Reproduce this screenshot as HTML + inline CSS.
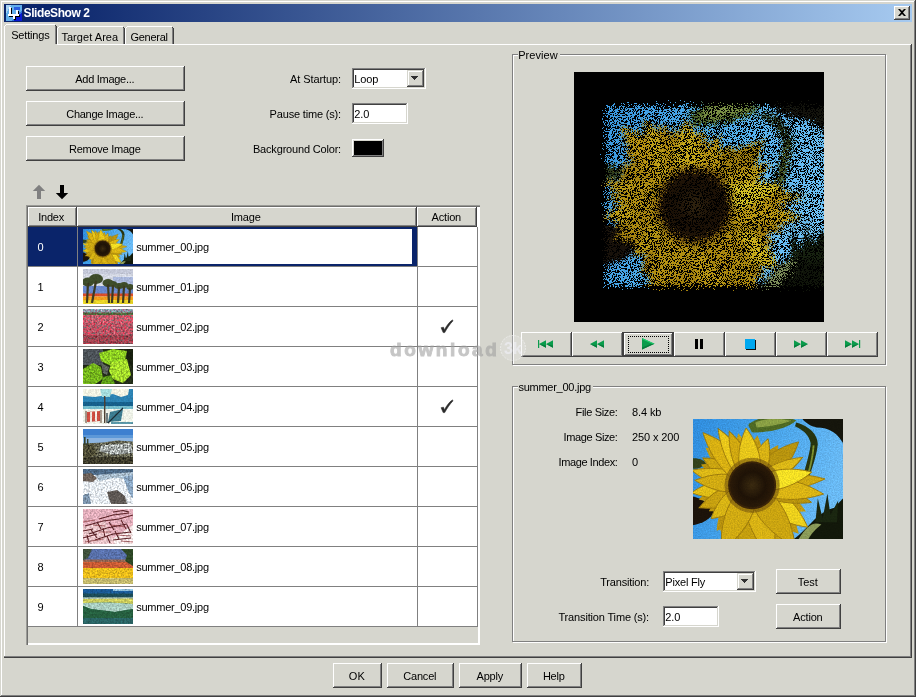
<!DOCTYPE html><html><head><meta charset="utf-8"><title>SlideShow 2</title><style>
html,body{margin:0;padding:0}
body{width:916px;height:697px;overflow:hidden;background:#d6d6ce;position:relative;font-family:"Liberation Sans",sans-serif;font-size:11px;color:#000}
.a{position:absolute;box-sizing:border-box}
.t{position:absolute;white-space:pre;font:11px/13px "Liberation Sans",sans-serif;height:13px}
.btn{background:#d6d6ce;box-shadow:inset -1px -1px 0 #404040,inset 1px 1px 0 #ffffff,inset -2px -2px 0 #808080}
.sunk{box-shadow:inset -1px -1px 0 #ffffff,inset 1px 1px 0 #808080,inset -2px -2px 0 #d6d6ce,inset 2px 2px 0 #404040}
.grp{border:1px solid #808080;box-shadow:1px 1px 0 #ffffff,inset 1px 1px 0 #ffffff}
.btn2{background:#d6d6ce;box-shadow:inset -1px -1px 0 #404040,inset 1px 1px 0 #d6d6ce,inset -2px -2px 0 #808080,inset 2px 2px 0 #ffffff}
.hd{background:#d6d6ce;box-shadow:inset -1px -1px 0 #404040,inset 1px 1px 0 #ffffff,inset -2px -2px 0 #808080}
svg{position:absolute;display:block}

</style></head><body><div id="root" style="position:absolute;left:0;top:0;width:916px;height:697px;will-change:transform">
<svg width="0" height="0" style="position:absolute"><defs>
<linearGradient id="sky" x1="0" y1="0" x2="1" y2="0.3"><stop offset="0" stop-color="#2c8adc"/><stop offset="0.5" stop-color="#46a2e8"/><stop offset="1" stop-color="#6abaf4"/></linearGradient>
<radialGradient id="disc"><stop offset="0" stop-color="#3a2a10"/><stop offset="0.6" stop-color="#1e1206"/><stop offset="1" stop-color="#2a1a08"/></radialGradient>
<pattern id="pfl" width="4" height="4" patternUnits="userSpaceOnUse"><rect width="4" height="4" fill="#5c7a3c"/><rect width="2" height="2" fill="#d05868"/><rect x="2" y="2" width="2" height="2" fill="#e890a0"/></pattern>
<pattern id="rock" width="5" height="4" patternUnits="userSpaceOnUse"><rect width="5" height="4" fill="#5c5c48"/><rect width="2" height="2" fill="#b8b8a8"/><rect x="3" y="2" width="2" height="2" fill="#34382c"/></pattern>
<filter id="soft" x="0" y="0" width="100%" height="100%" color-interpolation-filters="sRGB"><feGaussianBlur in="SourceGraphic" stdDeviation="1.1" result="b"/><feTurbulence type="fractalNoise" baseFrequency="0.45" numOctaves="2" seed="5" result="n"/><feColorMatrix in="n" type="matrix" values="1 0 0 0 0  1 0 0 0 0  1 0 0 0 0  0 0 0 0 1" result="g"/><feComposite in="b" in2="g" operator="arithmetic" k1="0.3" k2="0.85" k3="0" k4="0"/></filter>
<filter id="soft5" x="0" y="0" width="100%" height="100%"><feGaussianBlur stdDeviation="0.4"/></filter>
<filter id="gr1" x="0" y="0" width="100%" height="100%" color-interpolation-filters="sRGB"><feGaussianBlur in="SourceGraphic" stdDeviation="0.45" result="b"/><feTurbulence type="fractalNoise" baseFrequency="0.55" numOctaves="2" seed="4" result="n"/><feColorMatrix in="n" type="matrix" values="1 0 0 0 0  1 0 0 0 0  1 0 0 0 0  0 0 0 0 1" result="g"/><feComposite in="b" in2="g" operator="arithmetic" k1="0.30" k2="0.85" k3="0" k4="0"/></filter>
<filter id="gr2" x="0" y="0" width="100%" height="100%" color-interpolation-filters="sRGB"><feGaussianBlur in="SourceGraphic" stdDeviation="0.45" result="b"/><feTurbulence type="fractalNoise" baseFrequency="0.55" numOctaves="2" seed="7" result="n"/><feColorMatrix in="n" type="matrix" values="1 0 0 0 0  0 1 0 0 0  0.3 0.7 0 0 0  0 0 0 0 1" result="g"/><feComposite in="b" in2="g" operator="arithmetic" k1="1.60" k2="0.20" k3="0" k4="0"/></filter>
<filter id="gr3" x="0" y="0" width="100%" height="100%" color-interpolation-filters="sRGB"><feGaussianBlur in="SourceGraphic" stdDeviation="0.45" result="b"/><feTurbulence type="fractalNoise" baseFrequency="0.55" numOctaves="2" seed="10" result="n"/><feColorMatrix in="n" type="matrix" values="1 0 0 0 0  1 0 0 0 0  1 0 0 0 0  0 0 0 0 1" result="g"/><feComposite in="b" in2="g" operator="arithmetic" k1="1.00" k2="0.50" k3="0" k4="0"/></filter>
<filter id="gr4" x="0" y="0" width="100%" height="100%" color-interpolation-filters="sRGB"><feGaussianBlur in="SourceGraphic" stdDeviation="0.45" result="b"/><feTurbulence type="fractalNoise" baseFrequency="0.55" numOctaves="2" seed="13" result="n"/><feColorMatrix in="n" type="matrix" values="1 0 0 0 0  1 0 0 0 0  1 0 0 0 0  0 0 0 0 1" result="g"/><feComposite in="b" in2="g" operator="arithmetic" k1="0.30" k2="0.85" k3="0" k4="0"/></filter>
<filter id="gr5" x="0" y="0" width="100%" height="100%" color-interpolation-filters="sRGB"><feGaussianBlur in="SourceGraphic" stdDeviation="0.45" result="b"/><feTurbulence type="fractalNoise" baseFrequency="0.55" numOctaves="2" seed="16" result="n"/><feColorMatrix in="n" type="matrix" values="1 0 0 0 0  1 0 0 0 0  1 0 0 0 0  0 0 0 0 1" result="g"/><feComposite in="b" in2="g" operator="arithmetic" k1="2.00" k2="0.00" k3="0" k4="0"/></filter>
<filter id="gr6" x="0" y="0" width="100%" height="100%" color-interpolation-filters="sRGB"><feGaussianBlur in="SourceGraphic" stdDeviation="0.45" result="b"/><feTurbulence type="fractalNoise" baseFrequency="0.55" numOctaves="2" seed="19" result="n"/><feColorMatrix in="n" type="matrix" values="1 0 0 0 0  1 0 0 0 0  1 0 0 0 0  0 0 0 0 1" result="g"/><feComposite in="b" in2="g" operator="arithmetic" k1="0.90" k2="0.55" k3="0" k4="0"/></filter>
<filter id="gr7" x="0" y="0" width="100%" height="100%" color-interpolation-filters="sRGB"><feGaussianBlur in="SourceGraphic" stdDeviation="0.45" result="b"/><feTurbulence type="fractalNoise" baseFrequency="0.55" numOctaves="2" seed="22" result="n"/><feColorMatrix in="n" type="matrix" values="1 0 0 0 0  1 0 0 0 0  1 0 0 0 0  0 0 0 0 1" result="g"/><feComposite in="b" in2="g" operator="arithmetic" k1="0.60" k2="0.70" k3="0" k4="0"/></filter>
<filter id="gr8" x="0" y="0" width="100%" height="100%" color-interpolation-filters="sRGB"><feGaussianBlur in="SourceGraphic" stdDeviation="0.45" result="b"/><feTurbulence type="fractalNoise" baseFrequency="0.55" numOctaves="2" seed="25" result="n"/><feColorMatrix in="n" type="matrix" values="1 0 0 0 0  1 0 0 0 0  1 0 0 0 0  0 0 0 0 1" result="g"/><feComposite in="b" in2="g" operator="arithmetic" k1="0.70" k2="0.65" k3="0" k4="0"/></filter>
<filter id="gr9" x="0" y="0" width="100%" height="100%" color-interpolation-filters="sRGB"><feGaussianBlur in="SourceGraphic" stdDeviation="0.45" result="b"/><feTurbulence type="fractalNoise" baseFrequency="0.55" numOctaves="2" seed="28" result="n"/><feColorMatrix in="n" type="matrix" values="1 0 0 0 0  1 0 0 0 0  1 0 0 0 0  0 0 0 0 1" result="g"/><feComposite in="b" in2="g" operator="arithmetic" k1="0.60" k2="0.70" k3="0" k4="0"/></filter>
<symbol id="sun" viewBox="0 0 250 200" preserveAspectRatio="none">
<g filter="url(#soft)">
<rect x="-10" y="-10" width="270" height="220" fill="url(#sky)"/>
<path d="M92,10 C105,-6 150,-6 172,2 C160,16 120,24 98,22 Z" fill="#4f6a24"/>
<path d="M104,6 C120,-2 142,-2 164,3 C142,10 120,14 106,14 Z" fill="#8aa044"/>
<path d="M178,-5 L255,-5 L255,50 C244,24 228,14 206,14 C196,12 186,6 178,-5 Z" fill="#15150c"/>
<path d="M172,6 C194,12 208,26 208,42 C206,62 198,82 194,96 L184,94 C190,70 196,52 196,40 C194,28 184,18 170,12 Z" fill="#27340f"/>
<path d="M201,44 C200,60 196,78 192,92" stroke="#7d9030" stroke-width="3" fill="none"/>
<path d="M255,128 L255,205 L160,205 C176,196 188,182 198,172 C210,160 224,150 236,148 C242,140 248,134 255,128 Z" fill="#12180a"/>
<path d="M204,172 L208,132 L216,166 L224,124 L229,160 L242,136 L240,172 Z" fill="#1a2610"/>
<path d="M176,200 C190,178 200,170 214,176 C204,184 196,192 190,205 Z" fill="#8a9a58"/>
<path d="M-5,128 C14,132 28,140 36,152 C30,168 16,174 -5,178 Z" fill="#1c130a"/>
<path d="M-5,66 C8,64 18,68 22,74 C14,82 6,84 -5,82 Z" fill="#33421a"/>
<circle cx="98.5" cy="110.5" r="66" fill="#c8a210"/>
<ellipse cx="104.5" cy="170.5" rx="62" ry="50" fill="#c49e0e"/>
<path transform="translate(98.5,110.5) rotate(-158)" d="M18,-11.9 C32.2,-21.2 64.4,-17.0 92,0 C64.4,17.0 32.2,21.2 18,11.9 Z" fill="#b8920e"/>
<path transform="translate(98.5,110.5) rotate(-141)" d="M18,-11.9 C35.0,-21.2 70.0,-17.0 100,0 C70.0,17.0 35.0,21.2 18,11.9 Z" fill="#c29c10"/>
<path transform="translate(98.5,110.5) rotate(165)" d="M18,-11.9 C32.2,-21.2 64.4,-17.0 92,0 C64.4,17.0 32.2,21.2 18,11.9 Z" fill="#bc960e"/>
<path transform="translate(98.5,110.5) rotate(149)" d="M18,-11.9 C29.4,-21.2 58.8,-17.0 84,0 C58.8,17.0 29.4,21.2 18,11.9 Z" fill="#c09a10"/>
<path transform="translate(98.5,110.5) rotate(128)" d="M18,-14.0 C33.6,-25.0 67.2,-20.0 96,0 C67.2,20.0 33.6,25.0 18,14.0 Z" fill="#b8920e"/>
<path transform="translate(98.5,110.5) rotate(-105)" d="M18,-10.5 C31.5,-18.8 63.0,-15.0 90,0 C63.0,15.0 31.5,18.8 18,10.5 Z" fill="#c6a010"/>
<path transform="translate(98.5,110.5) rotate(-84)" d="M18,-10.5 C29.4,-18.8 58.8,-15.0 84,0 C58.8,15.0 29.4,18.8 18,10.5 Z" fill="#c09a10"/>
<path transform="translate(98.5,110.5) rotate(-57)" d="M18,-10.5 C28.0,-18.8 56.0,-15.0 80,0 C56.0,15.0 28.0,18.8 18,10.5 Z" fill="#b8920e"/>
<path transform="translate(98.5,110.5) rotate(26)" d="M18,-11.9 C35.0,-21.2 70.0,-17.0 100,0 C70.0,17.0 35.0,21.2 18,11.9 Z" fill="#c09a10"/>
<path transform="translate(98.5,110.5) rotate(46)" d="M18,-14.0 C39.2,-25.0 78.4,-20.0 112,0 C78.4,20.0 39.2,25.0 18,14.0 Z" fill="#bc960e"/>
<path transform="translate(98.5,110.5) rotate(-151)" d="M18,-11.2 C32.9,-20.0 65.8,-16.0 94,0 C65.8,16.0 32.9,20.0 18,11.2 Z" fill="#caa410" stroke="#9c7a0c" stroke-width="1.5"/>
<path transform="translate(98.5,110.5) rotate(37)" d="M18,-14.0 C40.6,-25.0 81.2,-20.0 116,0 C81.2,20.0 40.6,25.0 18,14.0 Z" fill="#ecd01c" stroke="#9c7a0c" stroke-width="1.5"/>
<path transform="translate(98.5,110.5) rotate(16)" d="M18,-9.8 C36.0,-17.5 72.1,-14.0 103,0 C72.1,14.0 36.0,17.5 18,9.8 Z" fill="#b8940e" stroke="#9c7a0c" stroke-width="1.5"/>
<path transform="translate(98.5,110.5) rotate(173)" d="M18,-11.2 C35.7,-20.0 71.4,-16.0 102,0 C71.4,16.0 35.7,20.0 18,11.2 Z" fill="#e0be16" stroke="#9c7a0c" stroke-width="1.5"/>
<path transform="translate(98.5,110.5) rotate(-166)" d="M18,-10.5 C36.4,-18.8 72.8,-15.0 104,0 C72.8,15.0 36.4,18.8 18,10.5 Z" fill="#dcb816" stroke="#9c7a0c" stroke-width="1.5"/>
<path transform="translate(98.5,110.5) rotate(95)" d="M18,-15.4 C43.8,-27.5 87.5,-22.0 125,0 C87.5,22.0 43.8,27.5 18,15.4 Z" fill="#c49e0e" stroke="#9c7a0c" stroke-width="1.5"/>
<path transform="translate(98.5,110.5) rotate(157)" d="M18,-11.2 C33.6,-20.0 67.2,-16.0 96,0 C67.2,16.0 33.6,20.0 18,11.2 Z" fill="#c6a010" stroke="#9c7a0c" stroke-width="1.5"/>
<path transform="translate(98.5,110.5) rotate(-43)" d="M18,-12.6 C37.1,-22.5 74.2,-18.0 106,0 C74.2,18.0 37.1,22.5 18,12.6 Z" fill="#b8940e" stroke="#9c7a0c" stroke-width="1.5"/>
<path transform="translate(98.5,110.5) rotate(-175)" d="M18,-10.5 C33.6,-18.8 67.2,-15.0 96,0 C67.2,15.0 33.6,18.8 18,10.5 Z" fill="#d0aa12" stroke="#9c7a0c" stroke-width="1.5"/>
<path transform="translate(98.5,110.5) rotate(75)" d="M18,-15.4 C43.8,-27.5 87.5,-22.0 125,0 C87.5,22.0 43.8,27.5 18,15.4 Z" fill="#d8b214" stroke="#9c7a0c" stroke-width="1.5"/>
<path transform="translate(98.5,110.5) rotate(141)" d="M18,-11.9 C30.8,-21.2 61.6,-17.0 88,0 C61.6,17.0 30.8,21.2 18,11.9 Z" fill="#d8b414" stroke="#9c7a0c" stroke-width="1.5"/>
<path transform="translate(98.5,110.5) rotate(-5)" d="M18,-9.8 C42.7,-17.5 85.4,-14.0 122,0 C85.4,14.0 42.7,17.5 18,9.8 Z" fill="#ccA610" stroke="#9c7a0c" stroke-width="1.5"/>
<path transform="translate(98.5,110.5) rotate(-29)" d="M18,-9.1 C33.6,-16.2 67.2,-13.0 96,0 C67.2,13.0 33.6,16.2 18,9.1 Z" fill="#dcb816" stroke="#9c7a0c" stroke-width="1.5"/>
<path transform="translate(98.5,110.5) rotate(-133)" d="M18,-12.6 C42.0,-22.5 84.0,-18.0 120,0 C84.0,18.0 42.0,22.5 18,12.6 Z" fill="#d8b012" stroke="#9c7a0c" stroke-width="1.5"/>
<path transform="translate(98.5,110.5) rotate(-121)" d="M18,-10.5 C38.5,-18.8 77.0,-15.0 110,0 C77.0,15.0 38.5,18.8 18,10.5 Z" fill="#e8c61a" stroke="#9c7a0c" stroke-width="1.5"/>
<path transform="translate(98.5,110.5) rotate(-113)" d="M18,-9.8 C34.3,-17.5 68.6,-14.0 98,0 C68.6,14.0 34.3,17.5 18,9.8 Z" fill="#d0a810" stroke="#9c7a0c" stroke-width="1.5"/>
<path transform="translate(98.5,110.5) rotate(-71)" d="M18,-10.5 C28.7,-18.8 57.4,-15.0 82,0 C57.4,15.0 28.7,18.8 18,10.5 Z" fill="#d8b214" stroke="#9c7a0c" stroke-width="1.5"/>
<path transform="translate(98.5,110.5) rotate(115)" d="M18,-14.7 C42.0,-26.2 84.0,-21.0 120,0 C84.0,21.0 42.0,26.2 18,14.7 Z" fill="#d0aa12" stroke="#9c7a0c" stroke-width="1.5"/>
<path transform="translate(98.5,110.5) rotate(55)" d="M18,-14.7 C43.8,-26.2 87.5,-21.0 125,0 C87.5,21.0 43.8,26.2 18,14.7 Z" fill="#caa410" stroke="#9c7a0c" stroke-width="1.5"/>
<path transform="translate(98.5,110.5) rotate(-96)" d="M18,-12.6 C33.6,-22.5 67.2,-18.0 96,0 C67.2,18.0 33.6,22.5 18,12.6 Z" fill="#e6c61a" stroke="#9c7a0c" stroke-width="1.5"/>
<path transform="translate(98.5,110.5) rotate(7)" d="M18,-11.9 C42.0,-21.2 84.0,-17.0 120,0 C84.0,17.0 42.0,21.2 18,11.9 Z" fill="#dab414" stroke="#9c7a0c" stroke-width="1.5"/>
<path transform="translate(98.5,110.5) rotate(-12.5)" d="M18,-11.2 C35.7,-20.0 71.4,-16.0 102,0 C71.4,16.0 35.7,20.0 18,11.2 Z" fill="#f4e024" stroke="#9c7a0c" stroke-width="1.5"/>
<circle cx="98.5" cy="110.5" r="46" fill="#6a4a0c" opacity="0.55"/>
<circle cx="98.5" cy="110.5" r="40" fill="#3a2408"/>
<circle cx="98.5" cy="110.5" r="37" fill="url(#disc)"/>
</g>
</symbol>
<filter id="nz" x="-5%" y="-5%" width="110%" height="110%" color-interpolation-filters="sRGB">
<feTurbulence type="fractalNoise" baseFrequency="0.83" numOctaves="2" seed="7" result="n1"/>
<feDisplacementMap in="SourceGraphic" in2="n1" scale="22" xChannelSelector="R" yChannelSelector="G" result="d"/>
<feColorMatrix in="d" type="matrix" values="0.84 0 0.08 0 0  0 0.82 0.16 0 0  0 0 1 0 0  0 0 0 1 0"/>
</filter>
<pattern id="dots" width="72" height="72" patternUnits="userSpaceOnUse"><path d="M6 0.5h1M10 0.5h3M15 0.5h1M20 0.5h2M23 0.5h4M35 0.5h1M40 0.5h4M50 0.5h2M56 0.5h1M59 0.5h3M64 0.5h4M69 0.5h1M0 1.5h1M2 1.5h1M4 1.5h1M6 1.5h2M10 1.5h1M12 1.5h1M16 1.5h1M18 1.5h2M21 1.5h4M26 1.5h1M28 1.5h1M34 1.5h2M38 1.5h2M42 1.5h1M47 1.5h2M50 1.5h1M52 1.5h1M55 1.5h2M58 1.5h2M63 1.5h1M65 1.5h3M69 1.5h3M1 2.5h2M8 2.5h3M14 2.5h1M18 2.5h1M20 2.5h1M28 2.5h1M40 2.5h1M50 2.5h1M52 2.5h1M55 2.5h1M60 2.5h3M64 2.5h2M70 2.5h1M0 3.5h1M7 3.5h2M14 3.5h2M17 3.5h2M22 3.5h1M26 3.5h2M29 3.5h1M32 3.5h1M34 3.5h2M37 3.5h1M39 3.5h3M49 3.5h1M51 3.5h2M55 3.5h3M65 3.5h1M68 3.5h1M0 4.5h1M7 4.5h1M12 4.5h1M18 4.5h1M21 4.5h2M27 4.5h1M29 4.5h1M31 4.5h2M34 4.5h2M43 4.5h2M46 4.5h1M52 4.5h1M56 4.5h1M61 4.5h1M65 4.5h1M1 5.5h1M6 5.5h1M8 5.5h1M13 5.5h2M17 5.5h1M19 5.5h3M23 5.5h2M26 5.5h1M28 5.5h1M30 5.5h2M34 5.5h1M37 5.5h2M45 5.5h1M49 5.5h2M52 5.5h1M55 5.5h2M58 5.5h2M63 5.5h1M66 5.5h2M71 5.5h1M4 6.5h4M11 6.5h3M17 6.5h2M22 6.5h1M27 6.5h1M30 6.5h1M34 6.5h2M37 6.5h1M48 6.5h1M61 6.5h2M64 6.5h2M68 6.5h1M71 6.5h1M9 7.5h1M12 7.5h1M14 7.5h5M27 7.5h1M30 7.5h1M32 7.5h1M34 7.5h1M37 7.5h1M42 7.5h2M46 7.5h1M48 7.5h5M57 7.5h1M60 7.5h1M65 7.5h1M1 8.5h1M4 8.5h2M7 8.5h1M11 8.5h1M19 8.5h2M24 8.5h2M31 8.5h2M36 8.5h3M41 8.5h1M43 8.5h2M48 8.5h1M50 8.5h2M54 8.5h2M59 8.5h1M61 8.5h1M63 8.5h1M66 8.5h1M71 8.5h1M0 9.5h1M2 9.5h2M7 9.5h1M9 9.5h2M12 9.5h2M16 9.5h3M20 9.5h2M29 9.5h2M34 9.5h4M40 9.5h1M46 9.5h1M49 9.5h2M57 9.5h1M60 9.5h2M64 9.5h1M66 9.5h1M69 9.5h2M3 10.5h1M25 10.5h1M28 10.5h3M32 10.5h1M34 10.5h3M39 10.5h2M44 10.5h5M51 10.5h4M56 10.5h1M60 10.5h1M63 10.5h1M67 10.5h2M2 11.5h1M5 11.5h2M8 11.5h1M12 11.5h4M20 11.5h1M22 11.5h1M24 11.5h1M28 11.5h2M31 11.5h1M37 11.5h1M41 11.5h1M43 11.5h1M46 11.5h1M48 11.5h4M54 11.5h1M56 11.5h1M62 11.5h2M65 11.5h1M68 11.5h1M71 11.5h1M1 12.5h2M4 12.5h2M8 12.5h2M11 12.5h1M15 12.5h1M17 12.5h3M22 12.5h1M26 12.5h4M31 12.5h1M39 12.5h1M41 12.5h1M48 12.5h3M52 12.5h2M58 12.5h1M62 12.5h1M64 12.5h1M70 12.5h1M1 13.5h3M6 13.5h1M8 13.5h1M10 13.5h1M12 13.5h1M17 13.5h1M22 13.5h1M24 13.5h1M26 13.5h1M29 13.5h1M31 13.5h3M37 13.5h1M43 13.5h2M46 13.5h1M49 13.5h1M51 13.5h1M53 13.5h1M55 13.5h1M57 13.5h1M6 14.5h2M13 14.5h1M15 14.5h2M20 14.5h1M23 14.5h2M26 14.5h2M34 14.5h1M38 14.5h1M40 14.5h1M43 14.5h5M51 14.5h1M53 14.5h2M56 14.5h1M61 14.5h2M65 14.5h1M67 14.5h1M69 14.5h1M0 15.5h1M2 15.5h1M4 15.5h2M7 15.5h1M11 15.5h1M15 15.5h3M19 15.5h3M24 15.5h1M28 15.5h2M32 15.5h1M34 15.5h1M39 15.5h1M41 15.5h2M44 15.5h2M47 15.5h2M50 15.5h1M53 15.5h1M59 15.5h1M62 15.5h1M71 15.5h1M1 16.5h1M3 16.5h1M8 16.5h1M10 16.5h1M13 16.5h1M18 16.5h3M24 16.5h1M26 16.5h1M31 16.5h5M38 16.5h1M40 16.5h1M42 16.5h3M48 16.5h1M50 16.5h2M53 16.5h1M57 16.5h1M60 16.5h2M63 16.5h1M65 16.5h1M67 16.5h2M0 17.5h2M3 17.5h1M6 17.5h2M10 17.5h1M13 17.5h2M24 17.5h3M28 17.5h3M32 17.5h1M37 17.5h1M39 17.5h1M41 17.5h5M49 17.5h3M53 17.5h1M57 17.5h2M60 17.5h1M62 17.5h1M65 17.5h1M67 17.5h3M71 17.5h1M0 18.5h1M3 18.5h1M5 18.5h1M8 18.5h3M15 18.5h6M25 18.5h1M28 18.5h1M33 18.5h1M35 18.5h1M38 18.5h1M40 18.5h1M42 18.5h2M46 18.5h1M48 18.5h3M52 18.5h1M57 18.5h1M59 18.5h2M62 18.5h1M66 18.5h4M0 19.5h1M2 19.5h1M6 19.5h1M14 19.5h1M19 19.5h2M22 19.5h2M25 19.5h3M29 19.5h2M33 19.5h1M41 19.5h2M44 19.5h1M50 19.5h1M54 19.5h2M58 19.5h4M63 19.5h4M68 19.5h1M0 20.5h1M3 20.5h2M9 20.5h1M11 20.5h2M22 20.5h2M25 20.5h3M31 20.5h1M38 20.5h1M40 20.5h3M45 20.5h3M50 20.5h2M54 20.5h1M63 20.5h3M67 20.5h1M69 20.5h3M1 21.5h1M3 21.5h2M6 21.5h4M11 21.5h3M16 21.5h1M22 21.5h1M26 21.5h1M33 21.5h6M40 21.5h1M42 21.5h2M45 21.5h1M55 21.5h1M59 21.5h1M61 21.5h1M63 21.5h1M65 21.5h1M68 21.5h1M70 21.5h2M1 22.5h3M5 22.5h1M9 22.5h4M14 22.5h1M17 22.5h1M20 22.5h1M22 22.5h1M24 22.5h1M28 22.5h1M31 22.5h2M35 22.5h3M39 22.5h1M41 22.5h1M43 22.5h1M50 22.5h1M57 22.5h1M61 22.5h1M67 22.5h1M71 22.5h1M4 23.5h1M7 23.5h1M15 23.5h1M18 23.5h1M23 23.5h2M26 23.5h1M30 23.5h1M37 23.5h5M44 23.5h2M50 23.5h1M52 23.5h1M56 23.5h1M59 23.5h3M63 23.5h1M66 23.5h2M70 23.5h2M2 24.5h2M7 24.5h2M10 24.5h1M18 24.5h1M20 24.5h1M22 24.5h1M24 24.5h1M33 24.5h1M35 24.5h1M38 24.5h1M41 24.5h1M43 24.5h1M45 24.5h1M47 24.5h1M52 24.5h1M54 24.5h3M59 24.5h1M62 24.5h1M65 24.5h1M67 24.5h1M6 25.5h1M10 25.5h1M12 25.5h3M17 25.5h2M22 25.5h1M26 25.5h1M28 25.5h1M32 25.5h2M36 25.5h1M38 25.5h1M40 25.5h1M42 25.5h2M45 25.5h1M47 25.5h1M49 25.5h2M55 25.5h1M57 25.5h1M65 25.5h2M70 25.5h1M0 26.5h3M6 26.5h1M8 26.5h3M12 26.5h1M21 26.5h1M23 26.5h2M27 26.5h1M30 26.5h1M32 26.5h1M36 26.5h4M41 26.5h1M44 26.5h1M47 26.5h1M50 26.5h1M52 26.5h2M56 26.5h1M60 26.5h4M68 26.5h1M70 26.5h1M1 27.5h2M6 27.5h1M8 27.5h1M13 27.5h1M17 27.5h1M23 27.5h1M27 27.5h1M30 27.5h2M33 27.5h2M38 27.5h3M44 27.5h1M48 27.5h1M51 27.5h1M53 27.5h1M60 27.5h1M62 27.5h1M64 27.5h4M1 28.5h1M5 28.5h1M7 28.5h2M11 28.5h2M14 28.5h1M23 28.5h1M25 28.5h2M28 28.5h1M32 28.5h2M37 28.5h1M39 28.5h2M43 28.5h1M49 28.5h1M52 28.5h1M55 28.5h3M59 28.5h4M64 28.5h3M69 28.5h1M7 29.5h2M10 29.5h1M12 29.5h1M14 29.5h1M19 29.5h2M22 29.5h1M25 29.5h1M27 29.5h1M29 29.5h1M31 29.5h1M33 29.5h1M35 29.5h2M43 29.5h1M45 29.5h1M47 29.5h1M49 29.5h1M53 29.5h1M58 29.5h3M68 29.5h1M3 30.5h1M6 30.5h2M10 30.5h2M18 30.5h2M24 30.5h3M28 30.5h1M31 30.5h1M34 30.5h1M36 30.5h3M41 30.5h2M44 30.5h1M46 30.5h1M48 30.5h4M56 30.5h1M58 30.5h2M62 30.5h2M67 30.5h1M70 30.5h1M0 31.5h2M6 31.5h1M9 31.5h1M11 31.5h2M16 31.5h1M18 31.5h1M21 31.5h2M28 31.5h3M32 31.5h7M45 31.5h4M52 31.5h2M55 31.5h1M62 31.5h1M65 31.5h1M68 31.5h3M0 32.5h3M7 32.5h5M13 32.5h1M16 32.5h2M23 32.5h1M25 32.5h1M29 32.5h1M32 32.5h2M35 32.5h1M37 32.5h1M39 32.5h2M42 32.5h1M47 32.5h2M50 32.5h1M54 32.5h1M59 32.5h1M61 32.5h1M63 32.5h1M66 32.5h1M2 33.5h1M5 33.5h3M17 33.5h1M19 33.5h2M22 33.5h1M24 33.5h1M30 33.5h1M32 33.5h1M35 33.5h2M41 33.5h1M43 33.5h1M53 33.5h3M57 33.5h1M62 33.5h3M68 33.5h1M71 33.5h1M4 34.5h2M8 34.5h1M13 34.5h2M16 34.5h5M26 34.5h1M29 34.5h1M37 34.5h1M41 34.5h1M43 34.5h2M46 34.5h1M49 34.5h1M55 34.5h1M59 34.5h3M64 34.5h1M0 35.5h1M2 35.5h2M5 35.5h2M9 35.5h1M14 35.5h1M16 35.5h3M24 35.5h1M28 35.5h1M31 35.5h1M34 35.5h1M40 35.5h1M47 35.5h1M54 35.5h1M58 35.5h1M60 35.5h1M63 35.5h1M65 35.5h1M68 35.5h1M70 35.5h1M8 36.5h1M13 36.5h1M15 36.5h1M18 36.5h1M22 36.5h1M26 36.5h1M29 36.5h1M36 36.5h1M38 36.5h2M44 36.5h2M47 36.5h2M50 36.5h2M54 36.5h4M60 36.5h1M63 36.5h1M66 36.5h1M69 36.5h1M71 36.5h1M1 37.5h1M7 37.5h2M10 37.5h1M12 37.5h1M18 37.5h2M21 37.5h1M24 37.5h3M28 37.5h1M30 37.5h1M34 37.5h3M40 37.5h3M44 37.5h2M48 37.5h1M50 37.5h1M52 37.5h7M60 37.5h2M65 37.5h1M8 38.5h4M14 38.5h2M28 38.5h2M33 38.5h1M37 38.5h1M39 38.5h2M43 38.5h1M50 38.5h1M54 38.5h1M57 38.5h1M60 38.5h2M63 38.5h2M66 38.5h1M69 38.5h1M71 38.5h1M3 39.5h2M6 39.5h4M12 39.5h2M15 39.5h1M19 39.5h1M23 39.5h1M25 39.5h1M28 39.5h2M32 39.5h4M44 39.5h1M48 39.5h2M51 39.5h3M56 39.5h1M61 39.5h2M64 39.5h1M66 39.5h2M2 40.5h1M4 40.5h4M10 40.5h2M15 40.5h6M22 40.5h2M25 40.5h2M31 40.5h1M33 40.5h3M41 40.5h1M44 40.5h1M47 40.5h3M54 40.5h1M58 40.5h1M62 40.5h1M0 41.5h1M3 41.5h1M5 41.5h1M7 41.5h2M10 41.5h1M14 41.5h2M17 41.5h1M19 41.5h1M21 41.5h6M29 41.5h1M31 41.5h1M37 41.5h1M39 41.5h1M43 41.5h1M46 41.5h1M48 41.5h2M51 41.5h1M56 41.5h3M64 41.5h2M67 41.5h5M1 42.5h1M4 42.5h2M14 42.5h1M18 42.5h1M20 42.5h1M24 42.5h2M30 42.5h1M39 42.5h1M41 42.5h1M43 42.5h1M45 42.5h2M51 42.5h2M54 42.5h2M58 42.5h2M62 42.5h1M64 42.5h1M67 42.5h1M69 42.5h2M0 43.5h2M6 43.5h2M10 43.5h1M12 43.5h1M14 43.5h1M18 43.5h1M22 43.5h1M24 43.5h1M28 43.5h1M30 43.5h2M34 43.5h1M39 43.5h3M45 43.5h3M50 43.5h1M60 43.5h1M62 43.5h1M64 43.5h2M0 44.5h3M5 44.5h4M11 44.5h2M14 44.5h1M16 44.5h1M18 44.5h2M21 44.5h1M23 44.5h1M26 44.5h4M32 44.5h1M35 44.5h2M38 44.5h1M40 44.5h1M44 44.5h1M46 44.5h1M48 44.5h2M51 44.5h1M61 44.5h1M70 44.5h2M0 45.5h2M3 45.5h1M7 45.5h1M9 45.5h1M12 45.5h1M14 45.5h1M16 45.5h2M23 45.5h1M25 45.5h1M27 45.5h3M32 45.5h1M35 45.5h2M39 45.5h1M43 45.5h4M50 45.5h3M59 45.5h1M63 45.5h1M65 45.5h2M68 45.5h3M2 46.5h5M10 46.5h3M14 46.5h1M17 46.5h3M22 46.5h1M24 46.5h1M27 46.5h1M33 46.5h1M35 46.5h1M37 46.5h2M42 46.5h1M46 46.5h3M53 46.5h2M56 46.5h4M64 46.5h2M67 46.5h1M69 46.5h3M0 47.5h4M5 47.5h1M7 47.5h1M10 47.5h2M15 47.5h1M29 47.5h1M34 47.5h1M36 47.5h1M38 47.5h1M40 47.5h1M44 47.5h1M46 47.5h2M51 47.5h2M55 47.5h1M58 47.5h1M60 47.5h2M64 47.5h1M66 47.5h1M68 47.5h2M6 48.5h2M11 48.5h1M13 48.5h4M19 48.5h3M24 48.5h2M33 48.5h1M36 48.5h1M38 48.5h1M40 48.5h2M49 48.5h1M53 48.5h2M63 48.5h1M65 48.5h1M70 48.5h1M2 49.5h2M5 49.5h3M12 49.5h1M17 49.5h3M21 49.5h1M31 49.5h1M36 49.5h2M48 49.5h3M53 49.5h1M55 49.5h2M58 49.5h1M62 49.5h1M64 49.5h1M66 49.5h3M70 49.5h1M1 50.5h1M3 50.5h3M12 50.5h2M18 50.5h1M22 50.5h1M25 50.5h1M28 50.5h1M30 50.5h3M34 50.5h1M40 50.5h1M42 50.5h1M44 50.5h2M47 50.5h1M50 50.5h1M52 50.5h1M57 50.5h1M59 50.5h1M63 50.5h1M66 50.5h1M71 50.5h1M0 51.5h1M2 51.5h1M4 51.5h3M11 51.5h3M17 51.5h5M24 51.5h1M26 51.5h1M29 51.5h2M33 51.5h1M35 51.5h1M39 51.5h2M45 51.5h2M48 51.5h3M52 51.5h4M59 51.5h1M61 51.5h1M64 51.5h1M66 51.5h1M69 51.5h1M3 52.5h2M6 52.5h1M8 52.5h1M11 52.5h2M18 52.5h1M21 52.5h4M28 52.5h1M30 52.5h2M36 52.5h3M40 52.5h1M49 52.5h3M55 52.5h1M62 52.5h1M64 52.5h1M68 52.5h1M70 52.5h1M0 53.5h1M7 53.5h1M11 53.5h1M13 53.5h3M17 53.5h1M22 53.5h2M28 53.5h2M34 53.5h2M39 53.5h4M45 53.5h2M48 53.5h1M52 53.5h1M54 53.5h1M56 53.5h1M60 53.5h1M63 53.5h1M65 53.5h3M69 53.5h2M0 54.5h1M2 54.5h2M12 54.5h2M15 54.5h1M19 54.5h3M31 54.5h2M36 54.5h1M40 54.5h1M42 54.5h6M49 54.5h1M55 54.5h1M58 54.5h1M65 54.5h2M70 54.5h1M5 55.5h2M18 55.5h1M24 55.5h1M26 55.5h2M29 55.5h1M31 55.5h1M34 55.5h1M36 55.5h1M42 55.5h2M46 55.5h1M52 55.5h1M55 55.5h1M58 55.5h1M61 55.5h3M67 55.5h1M0 56.5h1M3 56.5h2M8 56.5h1M10 56.5h1M20 56.5h1M22 56.5h2M25 56.5h3M30 56.5h5M42 56.5h2M45 56.5h1M48 56.5h1M51 56.5h1M53 56.5h3M58 56.5h1M63 56.5h1M67 56.5h2M70 56.5h2M0 57.5h1M2 57.5h2M6 57.5h1M15 57.5h1M17 57.5h2M20 57.5h1M22 57.5h1M31 57.5h1M35 57.5h1M37 57.5h1M40 57.5h1M43 57.5h1M45 57.5h1M47 57.5h1M54 57.5h1M56 57.5h2M61 57.5h1M63 57.5h4M69 57.5h2M1 58.5h1M3 58.5h2M7 58.5h1M12 58.5h3M30 58.5h2M33 58.5h1M38 58.5h2M42 58.5h2M55 58.5h1M60 58.5h3M65 58.5h1M69 58.5h2M0 59.5h2M6 59.5h1M8 59.5h2M12 59.5h1M14 59.5h3M25 59.5h2M31 59.5h1M34 59.5h1M39 59.5h1M42 59.5h1M44 59.5h4M54 59.5h1M56 59.5h1M58 59.5h1M61 59.5h1M63 59.5h1M65 59.5h4M70 59.5h1M0 60.5h1M11 60.5h3M15 60.5h1M17 60.5h1M22 60.5h1M24 60.5h1M29 60.5h2M32 60.5h2M37 60.5h2M43 60.5h8M53 60.5h2M56 60.5h2M59 60.5h1M63 60.5h2M68 60.5h1M71 60.5h1M0 61.5h1M8 61.5h1M12 61.5h3M17 61.5h1M20 61.5h1M22 61.5h3M31 61.5h1M36 61.5h1M38 61.5h1M42 61.5h2M45 61.5h1M55 61.5h1M57 61.5h1M63 61.5h1M70 61.5h2M2 62.5h1M6 62.5h1M8 62.5h1M11 62.5h5M18 62.5h1M27 62.5h2M32 62.5h1M34 62.5h1M38 62.5h2M41 62.5h2M46 62.5h2M51 62.5h1M53 62.5h3M57 62.5h2M61 62.5h2M67 62.5h1M8 63.5h1M11 63.5h2M19 63.5h1M22 63.5h3M27 63.5h2M33 63.5h2M36 63.5h1M38 63.5h2M41 63.5h2M46 63.5h1M49 63.5h3M53 63.5h1M56 63.5h1M58 63.5h1M60 63.5h1M68 63.5h2M71 63.5h1M0 64.5h2M7 64.5h4M12 64.5h2M19 64.5h1M22 64.5h1M24 64.5h1M26 64.5h3M33 64.5h1M39 64.5h3M43 64.5h1M45 64.5h1M47 64.5h2M50 64.5h1M54 64.5h2M57 64.5h1M60 64.5h1M62 64.5h1M65 64.5h1M67 64.5h1M69 64.5h2M1 65.5h1M3 65.5h1M5 65.5h1M8 65.5h2M11 65.5h1M13 65.5h1M15 65.5h1M18 65.5h2M22 65.5h2M25 65.5h2M31 65.5h2M37 65.5h4M42 65.5h1M45 65.5h1M48 65.5h1M50 65.5h5M57 65.5h1M62 65.5h1M65 65.5h1M67 65.5h2M70 65.5h1M0 66.5h1M15 66.5h2M18 66.5h1M21 66.5h2M27 66.5h1M30 66.5h1M43 66.5h3M48 66.5h1M55 66.5h1M57 66.5h1M60 66.5h2M65 66.5h1M70 66.5h2M0 67.5h2M3 67.5h3M8 67.5h1M11 67.5h1M14 67.5h1M18 67.5h1M21 67.5h2M25 67.5h2M31 67.5h2M35 67.5h3M39 67.5h3M46 67.5h1M48 67.5h1M54 67.5h1M56 67.5h1M58 67.5h1M60 67.5h2M63 67.5h2M66 67.5h1M69 67.5h1M71 67.5h1M1 68.5h2M7 68.5h3M11 68.5h3M20 68.5h1M23 68.5h1M25 68.5h4M30 68.5h4M37 68.5h3M44 68.5h3M48 68.5h3M52 68.5h3M56 68.5h1M58 68.5h2M63 68.5h1M67 68.5h2M2 69.5h1M5 69.5h2M11 69.5h1M13 69.5h1M22 69.5h4M27 69.5h1M31 69.5h2M34 69.5h2M38 69.5h2M44 69.5h1M46 69.5h1M49 69.5h1M52 69.5h1M55 69.5h1M60 69.5h1M64 69.5h1M67 69.5h2M0 70.5h1M3 70.5h1M10 70.5h1M12 70.5h1M21 70.5h1M24 70.5h1M26 70.5h3M30 70.5h1M34 70.5h2M42 70.5h2M45 70.5h2M48 70.5h1M50 70.5h1M53 70.5h1M55 70.5h1M57 70.5h2M62 70.5h1M65 70.5h2M68 70.5h3M5 71.5h1M11 71.5h4M19 71.5h4M26 71.5h2M29 71.5h1M33 71.5h2M36 71.5h2M44 71.5h3M48 71.5h2M55 71.5h1M57 71.5h1M59 71.5h4M64 71.5h3M70 71.5h2" stroke="#000" stroke-width="1" shape-rendering="crispEdges"/></pattern>
</defs></svg>
<div class="a " style="left:0px;top:0px;width:916px;height:697px;box-shadow:inset -1px -1px 0 #404040,inset 1px 1px 0 #d6d6ce,inset -2px -2px 0 #808080,inset 2px 2px 0 #ffffff;"></div>
<div class="a " style="left:4px;top:4px;width:908px;height:18px;background:linear-gradient(to right,#0a246a 0%,#0a246a 4%,#a6caf0 100%);"></div>
<svg class="a" style="left:6px;top:5px" width="16" height="16" viewBox="0 0 16 16" shape-rendering="crispEdges"><rect width="16" height="16" fill="#2f74dc"/><path d="M0,0 H16 V6 L10,9 L6,16 H0 Z" fill="#62aeea"/><path d="M0,0 H5 L0,9 Z" fill="#a8d4f4"/><path d="M8,16 L9,11 L16,8 V16 Z" fill="#0a1ad2"/><path d="M8,2 H14 V5 H8 Z" fill="#2a5ee0"/><path d="M4,3 H6 V10 H11 V6 H13 V10 H14 V12 H10 L9.5,15 H8.5 L7.5,12 H3 V10 H4 Z" fill="#000"/><path d="M3,2 H5 V9 H10 V5 H12 V9 H13 V11 H9 L8.5,14 H7.5 L7,11 H2 V9 H3 Z" fill="#fff"/></svg>
<span class="t" style="top:7px;letter-spacing:-0.43px;color:#fff;font-weight:bold;left:23.6px;font-size:12px;">SlideShow 2</span>
<div class="a btn" style="left:894px;top:6px;width:16px;height:14px;"></div>
<svg class="a" style="left:898px;top:9px" width="8" height="7" viewBox="0 0 8 7"><path d="M0,0 H2 L4,2 L6,0 H8 L5,3.5 L8,7 H6 L4,5 L2,7 H0 L3,3.5 Z" fill="#000"/></svg>
<div class="a " style="left:4px;top:26px;width:1px;height:631px;background:#ffffff;"></div>
<div class="a " style="left:57px;top:44px;width:854px;height:1px;background:#ffffff;"></div>
<div class="a " style="left:4px;top:656px;width:908px;height:1px;background:#808080;"></div>
<div class="a " style="left:4px;top:657px;width:908px;height:1px;background:#404040;"></div>
<div class="a " style="left:910px;top:45px;width:1px;height:612px;background:#808080;"></div>
<div class="a " style="left:911px;top:44px;width:1px;height:614px;background:#404040;"></div>
<div class="a " style="left:6px;top:24px;width:49px;height:1px;background:#ffffff;"></div>
<div class="a " style="left:5px;top:25px;width:1px;height:1px;background:#ffffff;"></div>
<div class="a " style="left:55px;top:26px;width:1px;height:18px;background:#808080;"></div>
<div class="a " style="left:56px;top:26px;width:1px;height:18px;background:#404040;"></div>
<div class="a " style="left:55px;top:25px;width:1px;height:1px;background:#404040;"></div>
<span class="t" style="top:29px;letter-spacing:-0.17px;left:11.2px;">Settings</span>
<div class="a " style="left:59px;top:26px;width:64px;height:1px;background:#ffffff;"></div>
<div class="a " style="left:58px;top:27px;width:1px;height:1px;background:#ffffff;"></div>
<div class="a " style="left:57px;top:28px;width:1px;height:16px;background:#ffffff;"></div>
<div class="a " style="left:123px;top:28px;width:1px;height:16px;background:#808080;"></div>
<div class="a " style="left:124px;top:28px;width:1px;height:16px;background:#404040;"></div>
<div class="a " style="left:123px;top:27px;width:1px;height:1px;background:#404040;"></div>
<span class="t" style="top:31px;letter-spacing:0.05px;left:61.4px;">Target Area</span>
<div class="a " style="left:127px;top:26px;width:45px;height:1px;background:#ffffff;"></div>
<div class="a " style="left:126px;top:27px;width:1px;height:1px;background:#ffffff;"></div>
<div class="a " style="left:125px;top:28px;width:1px;height:16px;background:#ffffff;"></div>
<div class="a " style="left:172px;top:28px;width:1px;height:16px;background:#808080;"></div>
<div class="a " style="left:173px;top:28px;width:1px;height:16px;background:#404040;"></div>
<div class="a " style="left:172px;top:27px;width:1px;height:1px;background:#404040;"></div>
<span class="t" style="top:31px;letter-spacing:-0.26px;left:130.4px;">General</span>
<div class="a btn" style="left:26px;top:66px;width:159px;height:25px;"></div>
<span class="t" style="top:73px;letter-spacing:-0.28px;left:4.799999999999997px;width:200px;text-align:center;">Add Image...</span>
<div class="a btn" style="left:26px;top:101px;width:159px;height:25px;"></div>
<span class="t" style="top:108px;letter-spacing:-0.28px;left:4.799999999999997px;width:200px;text-align:center;">Change Image...</span>
<div class="a btn" style="left:26px;top:136px;width:159px;height:25px;"></div>
<span class="t" style="top:143px;letter-spacing:-0.25px;left:4.799999999999997px;width:200px;text-align:center;">Remove Image</span>
<span class="t" style="top:73px;letter-spacing:-0.09px;right:575px;">At Startup:</span>
<span class="t" style="top:108px;letter-spacing:-0.17px;right:575px;">Pause time (s):</span>
<span class="t" style="top:143px;letter-spacing:-0.18px;right:575px;">Background Color:</span>
<div class="a sunk" style="left:352px;top:68px;width:74px;height:21px;background:#fff;"></div>
<span class="t" style="top:73px;letter-spacing:-0.1px;left:354.3px;">Loop</span>
<div class="a btn2" style="left:407px;top:70px;width:17px;height:17px;"></div>
<svg class="a" style="left:411px;top:76px" width="7" height="4" viewBox="0 0 7 4"><path d="M0,0 H7 L3.5,4 Z" fill="#303030" shape-rendering="crispEdges"/></svg>
<div class="a sunk" style="left:352px;top:103px;width:56px;height:21px;background:#fff;"></div>
<span class="t" style="top:108px;left:354.2px;">2.0</span>
<div class="a " style="left:352px;top:139px;width:32px;height:18px;background:#000;box-shadow:inset -1px -1px 0 #404040,inset 1px 1px 0 #ffffff,inset -2px -2px 0 #808080,inset 2px 2px 0 #d6d6ce;"></div>
<svg class="a" style="left:30px;top:182px" width="44" height="20" viewBox="30 182 44 20"><path d="M39,184.7 L45.2,191 H41 V199 H37 V191 H32.8 Z" fill="#808080"/><path d="M60,185 H64 V193 H68.2 L62,199.3 L55.8,193 H60 Z" fill="#000"/></svg>
<div class="a " style="left:26px;top:205px;width:454px;height:440px;box-shadow:inset 1px 1px 0 #9a9a96,inset 2px 2px 0 #6e6e6c,inset -2px -2px 0 #ffffff;"></div>
<div class="a hd" style="left:28px;top:207px;width:49px;height:20px;"></div>
<span class="t" style="top:211px;letter-spacing:-0.2px;left:-48.900000000000006px;width:200px;text-align:center;">Index</span>
<div class="a hd" style="left:77px;top:207px;width:340px;height:20px;"></div>
<span class="t" style="top:211px;letter-spacing:-0.2px;left:145.8px;width:200px;text-align:center;">Image</span>
<div class="a hd" style="left:417px;top:207px;width:60px;height:20px;"></div>
<span class="t" style="top:211px;letter-spacing:-0.2px;left:346.3px;width:200px;text-align:center;">Action</span>
<div class="a " style="left:477px;top:207px;width:1px;height:20px;background:#ffffff;"></div>
<div class="a " style="left:28px;top:227px;width:450px;height:400px;background:#ffffff;"></div>
<div class="a " style="left:28px;top:266px;width:450px;height:1px;background:#808080;"></div>
<div class="a " style="left:28px;top:306px;width:450px;height:1px;background:#808080;"></div>
<div class="a " style="left:28px;top:346px;width:450px;height:1px;background:#808080;"></div>
<div class="a " style="left:28px;top:386px;width:450px;height:1px;background:#808080;"></div>
<div class="a " style="left:28px;top:426px;width:450px;height:1px;background:#808080;"></div>
<div class="a " style="left:28px;top:466px;width:450px;height:1px;background:#808080;"></div>
<div class="a " style="left:28px;top:506px;width:450px;height:1px;background:#808080;"></div>
<div class="a " style="left:28px;top:546px;width:450px;height:1px;background:#808080;"></div>
<div class="a " style="left:28px;top:586px;width:450px;height:1px;background:#808080;"></div>
<div class="a " style="left:28px;top:626px;width:450px;height:1px;background:#808080;"></div>
<div class="a " style="left:77px;top:227px;width:1px;height:400px;background:#808080;"></div>
<div class="a " style="left:417px;top:227px;width:1px;height:400px;background:#808080;"></div>
<div class="a " style="left:477px;top:227px;width:1px;height:400px;background:#808080;"></div>
<div class="a " style="left:28px;top:227px;width:49px;height:39px;background:#0a246a;"></div>
<div class="a " style="left:78px;top:227px;width:339px;height:39px;background:#0a246a;"></div>
<div class="a " style="left:83px;top:229px;width:329px;height:35px;background:#ffffff;"></div>
<span class="t" style="top:241px;color:#fff;left:37.6px;">0</span>
<div class="a" style="left:83px;top:229px;width:50px;height:35px;overflow:hidden"><svg width="50" height="35" viewBox="0 12.5 250 175" preserveAspectRatio="none"><use href="#sun" width="250" height="200"/></svg></div>
<span class="t" style="top:241px;letter-spacing:-0.25px;left:136.2px;">summer_00.jpg</span>
<span class="t" style="top:281px;left:37.6px;">1</span>
<div class="a" style="left:83px;top:269px;width:50px;height:35px;overflow:hidden"><svg width="50" height="35" viewBox="0 0 50 35"><g filter="url(#gr1)"><rect width="50" height="35" fill="#d4d8e4"/><rect y="0" width="50" height="5" fill="#c4c8d8"/><rect x="30" y="8" width="20" height="9" fill="#aab8dc"/><rect y="17" width="50" height="8" fill="#6a88cc"/><rect y="24.5" width="50" height="3" fill="#d84c28"/><rect y="27.5" width="50" height="4" fill="#f09c1c"/><rect y="31" width="50" height="4" fill="#e8d428"/><g fill="#3e4c2a"><ellipse cx="5" cy="13" rx="6" ry="4.5"/><ellipse cx="13" cy="10" rx="7" ry="5"/><ellipse cx="25" cy="14" rx="5.5" ry="4"/><ellipse cx="30" cy="15" rx="4" ry="3"/><ellipse cx="36" cy="17" rx="4.5" ry="3"/><ellipse cx="41" cy="16" rx="4" ry="3"/><ellipse cx="47" cy="18" rx="3.5" ry="3"/></g><g stroke="#3c3a22" stroke-width="2.2" fill="none"><path d="M5,14 L4,34"/><path d="M13,12 L9,34"/><path d="M25,15 L26,34"/><path d="M30,16 L29,34"/><path d="M36,18 L35,34"/><path d="M41,17 L40,34"/><path d="M47,19 L46,34"/></g></g></svg></div>
<span class="t" style="top:281px;letter-spacing:-0.25px;left:136.2px;">summer_01.jpg</span>
<span class="t" style="top:321px;left:37.6px;">2</span>
<div class="a" style="left:83px;top:309px;width:50px;height:35px;overflow:hidden"><svg width="50" height="35" viewBox="0 0 50 35"><g filter="url(#gr2)"><rect width="50" height="35" fill="#b85464"/><rect width="50" height="4" fill="#8c94a4"/><rect y="3.5" width="50" height="2.5" fill="#56643c"/><rect y="6" width="50" height="8" fill="#c45c6c"/><rect y="26" width="50" height="9" fill="#9c4450"/></g></svg></div>
<span class="t" style="top:321px;letter-spacing:-0.25px;left:136.2px;">summer_02.jpg</span>
<span class="t" style="top:361px;left:37.6px;">3</span>
<div class="a" style="left:83px;top:349px;width:50px;height:35px;overflow:hidden"><svg width="50" height="35" viewBox="0 0 50 35"><g filter="url(#gr3)"><rect width="50" height="35" fill="#222c18"/><rect width="20" height="16" fill="#4c5258"/><path d="M16,4 L30,0 L44,2 L42,12 L34,20 L26,16 L18,12 Z" fill="#8ccc22"/><path d="M28,14 L44,10 L48,26 L40,34 L30,30 L26,22 Z" fill="#a4dc2c"/><path d="M0,20 L10,14 L18,18 L20,30 L12,35 L0,35 Z" fill="#74b41c"/><path d="M20,28 L28,26 L32,35 L18,35 Z" fill="#5c9c18"/><path d="M44,0 L50,0 L50,20 L44,10 Z" fill="#18200f"/><path d="M18,14 L26,18 L24,26 L20,24 Z" fill="#5a605a"/></g></svg></div>
<span class="t" style="top:361px;letter-spacing:-0.25px;left:136.2px;">summer_03.jpg</span>
<span class="t" style="top:401px;left:37.6px;">4</span>
<div class="a" style="left:83px;top:389px;width:50px;height:35px;overflow:hidden"><svg width="50" height="35" viewBox="0 0 50 35"><g filter="url(#gr4)"><rect width="50" height="35" fill="#eef2e8"/><rect width="50" height="14" fill="#2c82b2"/><rect y="13" width="50" height="4" fill="#16608c"/><rect y="17" width="50" height="3" fill="#74bccc"/><path d="M0,0 L46,0 L45,6 L38,8 L30,5 L12,8 L0,7 Z" fill="#f2f2e2"/><path d="M17,0 L29,0 L27,8 L19,8 Z" fill="#a4dcdc"/><rect x="21" y="7" width="1.4" height="27" fill="#4c4034"/><path d="M4,23 L17,22 L17,32 L4,33 Z" fill="#cc4c40"/><path d="M7,23 L9,23 L9,33 L7,33 Z M12,22 L14,22 L14,32 L12,32 Z" fill="#f0e8e0"/><path d="M3,22 L3,34 M18,21 L18,34" stroke="#5c3c2c" stroke-width="1"/><path d="M27,23 L40,20 L38,32 L25,33 Z" fill="#3c7c90"/><path d="M25,34 L40,19 M24,24 L24,34" stroke="#1c2c34" stroke-width="1.2"/><rect x="28" y="33" width="22" height="2" fill="#5c98a8"/></g></svg></div>
<span class="t" style="top:401px;letter-spacing:-0.25px;left:136.2px;">summer_04.jpg</span>
<span class="t" style="top:441px;left:37.6px;">5</span>
<div class="a" style="left:83px;top:429px;width:50px;height:35px;overflow:hidden"><svg width="50" height="35" viewBox="0 0 50 35"><g filter="url(#gr5)"><rect width="50" height="35" fill="#626250"/><path d="M18,16 L48,14 L50,24 L30,26 L16,22 Z" fill="#a4aaa8"/><rect y="28" width="50" height="7" fill="#3c3a2a"/><path d="M0,14 L10,14 L14,26 L0,30 Z" fill="#4c4a34"/></g><g filter="url(#soft5)"><rect width="50" height="7" fill="#3c80d0"/><rect y="6" width="50" height="4" fill="#5c98d8"/><path d="M0,9 H50 V12.5 L34,11.5 L20,13.5 L0,14.5 Z" fill="#8cb4e0"/><rect x="1" y="8" width="1.6" height="8" fill="#34402c"/><rect x="4" y="10" width="1.4" height="6" fill="#34402c"/></g></svg></div>
<span class="t" style="top:441px;letter-spacing:-0.25px;left:136.2px;">summer_05.jpg</span>
<span class="t" style="top:481px;left:37.6px;">6</span>
<div class="a" style="left:83px;top:469px;width:50px;height:35px;overflow:hidden"><svg width="50" height="35" viewBox="0 0 50 35"><g filter="url(#gr6)"><rect width="50" height="35" fill="#e6ecf2"/><rect width="50" height="6" fill="#4c6884"/><path d="M0,5 L8,4 L14,9 L10,13 L0,12 Z" fill="#6c6058"/><path d="M12,6 L50,3 L50,10 L30,9 L16,12 Z" fill="#a8bccc"/><path d="M24,23 L34,21 L42,27 L44,35 L28,35 L26,30 Z" fill="#5e5854"/><path d="M40,8 L50,6 L50,30 L46,24 Z" fill="#88a4c0"/><path d="M0,26 L6,24 L8,35 L0,35 Z" fill="#7c94ac"/></g></svg></div>
<span class="t" style="top:481px;letter-spacing:-0.25px;left:136.2px;">summer_06.jpg</span>
<span class="t" style="top:521px;left:37.6px;">7</span>
<div class="a" style="left:83px;top:509px;width:50px;height:35px;overflow:hidden"><svg width="50" height="35" viewBox="0 0 50 35"><g filter="url(#gr7)"><rect width="50" height="35" fill="#e2aebb"/><path d="M22,35 L50,16 L50,35 Z" fill="#f6e8e8"/><path d="M0,18 L22,12 L32,35 L0,35 Z" fill="#eac6ca"/><g stroke="#5a2024" stroke-width="1.1" fill="none"><path d="M30,3 L40,1.5 L46,3"/><path d="M16,10 L30,6 L46,4"/><path d="M2,17 L20,12 L36,10 L50,6"/><path d="M6,25 L24,19 L44,15"/><path d="M12,31 L30,25 L48,23"/><path d="M0,29 L14,25"/><path d="M30,31 L48,29"/><path d="M0,22 L10,20"/><path d="M8,21 L14,29 M26,13 L31,21 M38,11 L43,20 M20,19 L22,28 M32,22 L36,30 M14,13 L18,20 M44,16 L48,24 M4,26 L6,34 M24,27 L27,34"/></g><g stroke="#8a3c40" stroke-width="0.8" fill="none"><path d="M2,33 L20,30 M10,16 L22,17 M28,16 L42,18 M34,26 L48,27 M16,23 L28,23 M38,32 L50,33 M0,13 L12,11"/></g></g></svg></div>
<span class="t" style="top:521px;letter-spacing:-0.25px;left:136.2px;">summer_07.jpg</span>
<span class="t" style="top:561px;left:37.6px;">8</span>
<div class="a" style="left:83px;top:549px;width:50px;height:35px;overflow:hidden"><svg width="50" height="35" viewBox="0 0 50 35"><g filter="url(#gr8)"><rect width="50" height="35" fill="#e6b81a"/><rect width="50" height="11" fill="#5870aa"/><rect y="10.5" width="50" height="2.5" fill="#946450"/><rect y="13" width="50" height="6" fill="#c85a34"/><rect y="19" width="50" height="10" fill="#eabc1a"/><rect y="29" width="50" height="6" fill="#c2b86c"/><path d="M38,0 L50,0 L50,17 L42,12 L44,6 Z" fill="#2e4826"/><path d="M0,0 L9,0 L5,9 L0,11 Z" fill="#40523c"/></g></svg></div>
<span class="t" style="top:561px;letter-spacing:-0.25px;left:136.2px;">summer_08.jpg</span>
<span class="t" style="top:601px;left:37.6px;">9</span>
<div class="a" style="left:83px;top:589px;width:50px;height:35px;overflow:hidden"><svg width="50" height="35" viewBox="0 0 50 35"><g filter="url(#gr9)"><rect width="50" height="35" fill="#286040"/><rect width="50" height="5" fill="#1a5a96"/><rect x="30" y="0" width="20" height="2" fill="#8cbcd8"/><rect y="4.5" width="50" height="4" fill="#1c4c58"/><rect y="8.5" width="50" height="1.2" fill="#dce8e8"/><path d="M0,10 L50,9.5 L50,15 L26,13.5 L0,14 Z" fill="#cccc5c"/><path d="M0,14 L26,13.5 L50,15 L50,20 L32,23 L8,20 L0,17 Z" fill="#a8ccc0"/><path d="M0,17 L8,20 L32,23 L50,20 L50,35 L0,35 Z" fill="#266040"/><rect y="29" width="50" height="6" fill="#2a6464"/></g></svg></div>
<span class="t" style="top:601px;letter-spacing:-0.25px;left:136.2px;">summer_09.jpg</span>
<svg class="a" style="left:438px;top:316px" width="18" height="20" viewBox="438 316 18 20"><path d="M441.1,327.7 L443.5,327.2 L444.4,329.9 C446.6,325.6 449.6,321.6 452.4,320 L453.1,320.7 C450.2,323.6 446.8,328.6 444.7,332.6 L443.2,332.6 Z" fill="#2a2a2a" stroke="#2a2a2a" stroke-width="0.6" stroke-linejoin="round"/></svg>
<svg class="a" style="left:438px;top:396px" width="18" height="20" viewBox="438 316 18 20"><path d="M441.1,327.7 L443.5,327.2 L444.4,329.9 C446.6,325.6 449.6,321.6 452.4,320 L453.1,320.7 C450.2,323.6 446.8,328.6 444.7,332.6 L443.2,332.6 Z" fill="#2a2a2a" stroke="#2a2a2a" stroke-width="0.6" stroke-linejoin="round"/></svg>
<div class="a grp" style="left:512px;top:54px;width:374px;height:311px;"></div>
<div class="a " style="left:518px;top:50px;width:42px;height:12px;background:#d6d6ce;"></div>
<span class="t" style="top:49px;letter-spacing:0.05px;left:518.2px;">Preview</span>
<div class="a " style="left:574px;top:72px;width:250px;height:250px;background:#000;"></div>
<div class="a" style="left:574px;top:72px;width:250px;height:250px;overflow:hidden"><svg style="left:22px;top:24px" width="250" height="202" viewBox="-10 -10 250 202"><g filter="url(#nz)"><use href="#sun" x="0" y="0" width="225" height="180"/></g><rect x="-10" y="-10" width="250" height="202" fill="url(#dots)"/></svg></div>
<div class="a btn" style="left:521px;top:332px;width:51px;height:25px;"></div>
<div class="a btn" style="left:572px;top:332px;width:51px;height:25px;"></div>
<div class="a " style="left:623px;top:332px;width:51px;height:25px;background:#404040;"></div>
<div class="a btn" style="left:624px;top:333px;width:49px;height:23px;"></div>
<div class="a " style="left:628px;top:336px;width:41px;height:17px;border:1px dotted #000;"></div>
<div class="a btn" style="left:674px;top:332px;width:51px;height:25px;"></div>
<div class="a btn" style="left:725px;top:332px;width:51px;height:25px;"></div>
<div class="a btn" style="left:776px;top:332px;width:51px;height:25px;"></div>
<div class="a btn" style="left:827px;top:332px;width:51px;height:25px;"></div>
<svg class="a" style="left:538px;top:340px" width="16" height="8" viewBox="0 0 16 8"><rect x="0" y="0" width="1.2" height="8" fill="#0a9c4c"/><path d="M1,4 L8,0.3 V7.7 Z M8,4 L15,0.3 V7.7 Z" fill="#0a9c4c"/><path d="M1,4 L8,7.7 V5.5 Z M8,4 L15,7.7 V5.5 Z" fill="#087c3c"/></svg>
<svg class="a" style="left:590px;top:340px" width="15" height="8" viewBox="0 0 15 8"><path d="M0,4 L7,0.3 V7.7 Z M7,4 L14,0.3 V7.7 Z" fill="#0a9c4c"/><path d="M0,4 L7,7.7 V5.5 Z M7,4 L14,7.7 V5.5 Z" fill="#087c3c"/></svg>
<svg class="a" style="left:642px;top:338px" width="13" height="12" viewBox="0 0 13 12"><path d="M0,0 L12.5,5.7 L0,11.4 Z" fill="#0a9c4c"/><path d="M0,0 L12.5,5.7 L11,6.2 L0.8,1.6 Z" fill="#22d070"/><path d="M0,11.4 L12.5,5.7 L9,5.9 L0,9.6 Z" fill="#087c3c"/></svg>
<div class="a " style="left:695px;top:339px;width:3px;height:10px;background:#000;"></div>
<div class="a " style="left:700px;top:339px;width:3px;height:10px;background:#000;"></div>
<div class="a " style="left:746px;top:340px;width:10px;height:10px;background:#101010;"></div>
<div class="a " style="left:745px;top:339px;width:10px;height:10px;background:#00a8f0;"></div>
<svg class="a" style="left:794px;top:340px" width="15" height="8" viewBox="0 0 15 8"><path d="M0,0.3 L7,4 L0,7.7 Z M7,0.3 L14,4 L7,7.7 Z" fill="#0a9c4c"/><path d="M0,7.7 L7,4 L0,5.5 Z M7,7.7 L14,4 L7,5.5 Z" fill="#087c3c"/></svg>
<svg class="a" style="left:845px;top:340px" width="16" height="8" viewBox="0 0 16 8"><path d="M0,0.3 L7,4 L0,7.7 Z M7,0.3 L14,4 L7,7.7 Z" fill="#0a9c4c"/><path d="M0,7.7 L7,4 L0,5.5 Z M7,7.7 L14,4 L7,5.5 Z" fill="#087c3c"/><rect x="14" y="0" width="1.2" height="8" fill="#0a9c4c"/></svg>
<div class="a grp" style="left:512px;top:386px;width:374px;height:256px;"></div>
<div class="a " style="left:518px;top:381px;width:75px;height:12px;background:#d6d6ce;"></div>
<span class="t" style="top:381px;letter-spacing:-0.25px;left:518.4px;">summer_00.jpg</span>
<span class="t" style="top:406px;letter-spacing:-0.33px;right:298.5px;">File Size:</span>
<span class="t" style="top:431px;letter-spacing:-0.38px;right:298.5px;">Image Size:</span>
<span class="t" style="top:456px;letter-spacing:-0.39px;right:298.5px;">Image Index:</span>
<span class="t" style="top:406px;letter-spacing:-0.1px;left:632px;">8.4 kb</span>
<span class="t" style="top:431px;letter-spacing:-0.12px;left:632px;">250 x 200</span>
<span class="t" style="top:456px;left:632px;">0</span>
<svg class="a" style="left:693px;top:419px" width="150" height="120" viewBox="0 0 250 200" preserveAspectRatio="none"><use href="#sun" width="250" height="200"/></svg>
<span class="t" style="top:576px;letter-spacing:-0.2px;right:267px;">Transition:</span>
<span class="t" style="top:611px;letter-spacing:-0.16px;right:267px;">Transition Time (s):</span>
<div class="a sunk" style="left:663px;top:571px;width:93px;height:21px;background:#fff;"></div>
<span class="t" style="top:576px;letter-spacing:-0.2px;left:665.3px;">Pixel Fly</span>
<div class="a btn2" style="left:737px;top:573px;width:17px;height:17px;"></div>
<svg class="a" style="left:741px;top:579px" width="7" height="4" viewBox="0 0 7 4"><path d="M0,0 H7 L3.5,4 Z" fill="#303030" shape-rendering="crispEdges"/></svg>
<div class="a sunk" style="left:663px;top:606px;width:56px;height:21px;background:#fff;"></div>
<span class="t" style="top:611px;left:665.2px;">2.0</span>
<div class="a btn" style="left:776px;top:569px;width:65px;height:25px;"></div>
<span class="t" style="top:576px;left:707.8px;width:200px;text-align:center;">Test</span>
<div class="a btn" style="left:776px;top:604px;width:65px;height:25px;"></div>
<span class="t" style="top:611px;letter-spacing:-0.2px;left:707.8px;width:200px;text-align:center;">Action</span>
<div class="a btn" style="left:333px;top:663px;width:49px;height:25px;"></div>
<span class="t" style="top:670px;left:256.8px;width:200px;text-align:center;">OK</span>
<div class="a btn" style="left:387px;top:663px;width:67px;height:25px;"></div>
<span class="t" style="top:670px;letter-spacing:-0.2px;left:319.8px;width:200px;text-align:center;">Cancel</span>
<div class="a btn" style="left:459px;top:663px;width:63px;height:25px;"></div>
<span class="t" style="top:670px;letter-spacing:-0.2px;left:389.8px;width:200px;text-align:center;">Apply</span>
<div class="a btn" style="left:527px;top:663px;width:55px;height:25px;"></div>
<span class="t" style="top:670px;letter-spacing:-0.2px;left:453.8px;width:200px;text-align:center;">Help</span>
<span class="a" style="left:390px;top:339.3px;font:bold 19px/22px 'Liberation Sans',sans-serif;letter-spacing:2.6px;color:#a0a0a0;-webkit-text-stroke:0.9px #a0a0a0;opacity:0.6;white-space:pre">download</span>
<svg class="a" style="left:499px;top:334px" width="28" height="28" viewBox="0 0 28 28"><circle cx="14" cy="14" r="12.5" fill="rgba(235,235,235,0.28)" stroke="rgba(245,245,245,0.6)" stroke-width="1" stroke-dasharray="2 1"/><text x="14" y="20" text-anchor="middle" font-family="Liberation Sans" font-weight="bold" font-size="16" fill="rgba(238,238,244,0.7)">3k</text></svg>
</div></body></html>
